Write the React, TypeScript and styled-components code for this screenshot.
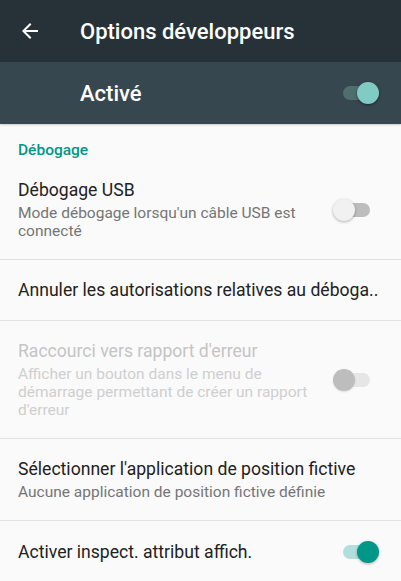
import React from "react";
import styled, { createGlobalStyle } from "styled-components";

const Global = createGlobalStyle`
  html, body { margin: 0; padding: 0; background: #fafafa; }
  body { font-family: Roboto, "Noto Sans", "Liberation Sans", sans-serif; -webkit-font-smoothing: antialiased; }
  * { box-sizing: border-box; }
`;

const Page = styled.div`
  width: 401px;
  min-height: 581px;
  background: #fafafa;
  display: flex;
  flex-direction: column;
`;

const Toolbar = styled.header`
  height: 62px;
  background: #263238;
  display: flex;
  align-items: center;
  padding-left: 18px;
`;

const BackButton = styled.div`
  width: 24px;
  height: 24px;
  display: flex;
  margin-right: 38px;
`;

const Title = styled.h1`
  margin: 0;
  color: #ffffff;
  font-size: 22px;
  font-weight: 500;
`;

const MasterBar = styled.div`
  height: 62px;
  background: #37474f;
  display: flex;
  align-items: center;
  justify-content: space-between;
  padding-left: 80px;
  padding-right: 22px;
  box-shadow: 0 1px 2px rgba(0, 0, 0, 0.2);
`;

const MasterLabel = styled.span`
  color: #ffffff;
  font-size: 22px;
  font-weight: 500;
`;

const Category = styled.div`
  padding: 16px 18px 0 18px;
  height: 36px;
  color: #009688;
  font-size: 15.5px;
  font-weight: 500;
  line-height: 20px;
`;

const Item = styled.div<{ $last?: boolean }>`
  display: flex;
  align-items: center;
  padding: 19px 22px 19px 18px;
  border-bottom: ${(p) => (p.$last ? "none" : "1px solid #e2e2e2")};
`;

const Texts = styled.div`
  flex: 1;
  min-width: 0;
  display: flex;
  flex-direction: column;
`;

const ItemTitle = styled.div<{ $disabled?: boolean }>`
  font-size: 17.6px;
  line-height: 22px;
  color: ${(p) => (p.$disabled ? "#c4c4c4" : "#212121")};
  white-space: nowrap;
`;

const ItemSummary = styled.div<{ $disabled?: boolean; $wide?: boolean }>`
  margin-top: 3px;
  font-size: 15.5px;
  line-height: 18px;
  color: ${(p) => (p.$disabled ? "#cfcfcf" : "#757575")};
  max-width: ${(p) => (p.$wide ? "none" : "306px")};
`;

type SwitchKind = "headerOn" | "off" | "disabled" | "on";

const palette: Record<SwitchKind, { track: string; thumb: string; shadow: string }> = {
  headerOn: { track: "#4f6e6d", thumb: "#80cbc4", shadow: "0 1px 3px rgba(0,0,0,0.45)" },
  off: { track: "#bdbdbd", thumb: "#f1f1f1", shadow: "0 1px 3px rgba(0,0,0,0.3)" },
  disabled: { track: "#e6e6e6", thumb: "#bdbdbd", shadow: "0 1px 2px rgba(0,0,0,0.12)" },
  on: { track: "#b2dfdb", thumb: "#009688", shadow: "0 1px 3px rgba(0,0,0,0.3)" },
};

const SwitchBox = styled.div`
  position: relative;
  width: 46px;
  height: 24px;
  flex: none;
`;

const Track = styled.div<{ $kind: SwitchKind }>`
  position: absolute;
  left: 10px;
  top: 5px;
  width: 27px;
  height: 14px;
  border-radius: 7px;
  background: ${(p) => palette[p.$kind].track};
`;

const Thumb = styled.div<{ $kind: SwitchKind; $checked: boolean }>`
  position: absolute;
  top: 1px;
  left: ${(p) => (p.$checked ? "24px" : "0px")};
  width: 22px;
  height: 22px;
  border-radius: 50%;
  background: ${(p) => palette[p.$kind].thumb};
  box-shadow: ${(p) => palette[p.$kind].shadow};
`;

const Switch = ({ kind }: { kind: SwitchKind }) => (
  <SwitchBox>
    <Track $kind={kind} />
    <Thumb $kind={kind} $checked={kind === "on" || kind === "headerOn"} />
  </SwitchBox>
);

const SwitchSlot = styled.div`
  margin-left: 12px;
  display: flex;
  align-items: center;
`;

export default function App() {
  return (
    <Page>
      <Global />
      <Toolbar>
        <BackButton>
          <svg width="24" height="24" viewBox="0 0 24 24">
            <path fill="#ffffff" d="M20 11H7.83l5.59-5.59L12 4l-8 8 8 8 1.41-1.41L7.83 13H20v-2z" />
          </svg>
        </BackButton>
        <Title>Options développeurs</Title>
      </Toolbar>
      <MasterBar>
        <MasterLabel>Activé</MasterLabel>
        <Switch kind="headerOn" />
      </MasterBar>
      <Category>Débogage</Category>
      <Item>
        <Texts>
          <ItemTitle>Débogage USB</ItemTitle>
          <ItemSummary>Mode débogage lorsqu'un câble USB est connecté</ItemSummary>
        </Texts>
        <SwitchSlot>
          <Switch kind="off" />
        </SwitchSlot>
      </Item>
      <Item>
        <Texts>
          <ItemTitle>Annuler les autorisations relatives au déboga..</ItemTitle>
        </Texts>
      </Item>
      <Item>
        <Texts>
          <ItemTitle $disabled>Raccourci vers rapport d'erreur</ItemTitle>
          <ItemSummary $disabled>
            Afficher un bouton dans le menu de démarrage permettant de créer un rapport d'erreur
          </ItemSummary>
        </Texts>
        <SwitchSlot>
          <Switch kind="disabled" />
        </SwitchSlot>
      </Item>
      <Item>
        <Texts>
          <ItemTitle>Sélectionner l'application de position fictive</ItemTitle>
          <ItemSummary $wide>Aucune application de position fictive définie</ItemSummary>
        </Texts>
      </Item>
      <Item $last>
        <Texts>
          <ItemTitle>Activer inspect. attribut affich.</ItemTitle>
        </Texts>
        <SwitchSlot>
          <Switch kind="on" />
        </SwitchSlot>
      </Item>
    </Page>
  );
}
